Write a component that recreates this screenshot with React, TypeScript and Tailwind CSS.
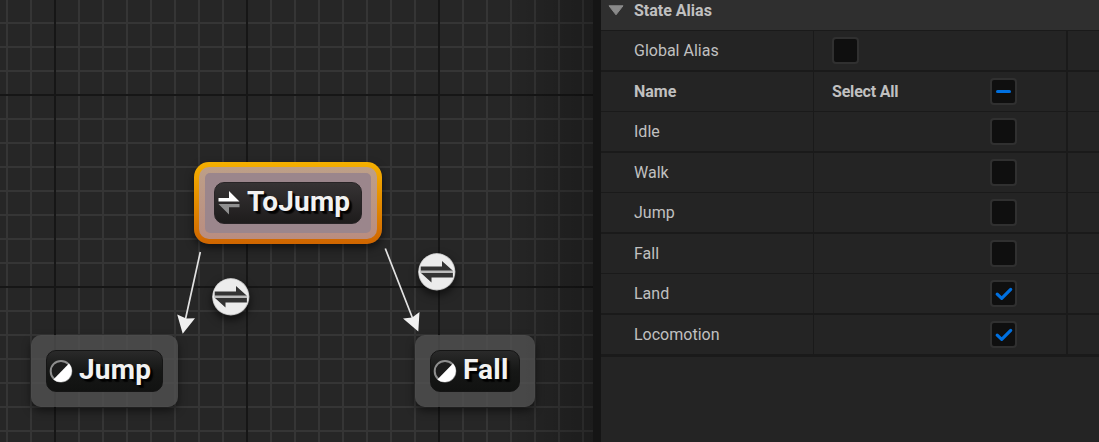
import React from "react";

const ALIASES = [
  { name: "Idle", checked: false },
  { name: "Walk", checked: false },
  { name: "Jump", checked: false },
  { name: "Fall", checked: false },
  { name: "Land", checked: true },
  { name: "Locomotion", checked: true },
];

type BoxState = "off" | "on" | "mixed";

function Checkbox({ state }: { state: BoxState }) {
  return (
    <span className="flex size-[27px] shrink-0 items-center justify-center rounded-[4px] border-2 border-[#303030] bg-[#0f0f0f]">
      {state === "mixed" && <span className="h-[3px] w-[15px] rounded-full bg-[#0070e0]" />}
      {state === "on" && (
        <svg className="h-[23px] w-[23px]" viewBox="0 0 23 23" fill="none">
          <path d="M5.2 12.1 L9.7 16.3 L18.7 7.4" stroke="#0070e0" strokeWidth="3.2" strokeLinecap="round" strokeLinejoin="round" />
        </svg>
      )}
    </span>
  );
}

function Row({
  label,
  line,
  bold,
  children,
}: {
  label: string;
  line: string;
  bold?: boolean;
  children: React.ReactNode;
}) {
  return (
    <div className={`flex border-[#1a1a1a] ${line} ${bold ? "font-bold" : ""}`}>
      <div className="flex h-[39px] w-[212px] items-center pl-[33px]">{label}</div>
      <div className="flex h-[39px] w-[255px] items-center border-r-2 border-l border-[#1a1a1a] pl-[18px]">{children}</div>
    </div>
  );
}

function StateIcon() {
  return (
    <svg className="size-6 shrink-0" viewBox="0 0 24 24">
      <circle cx="12" cy="12.2" r="10.3" fill="#1c1c1c" stroke="#8e8e8e" strokeWidth="2" />
      <path d="M20 4.4 A11.2 11.2 0 0 1 4.4 20.4 Z" fill="#ffffff" />
    </svg>
  );
}

function AliasIcon() {
  return (
    <svg className="h-6 w-[22px] shrink-0" viewBox="0 0 22 24">
      <path d="M0.5 7 H11 V0 L21.5 10.4 H0.5 Z" fill="#ffffff" />
      <path d="M21.5 16.2 H11 V23.4 L0.5 13 H21.5 Z" fill="#8f8f8f" />
    </svg>
  );
}

function Title({ children }: { children: string }) {
  return (
    <span className="text-[28px] leading-[38px] font-bold tracking-[0.2px] text-[#f2f2f2] [text-shadow:2px_2px_1px_rgba(0,0,0,0.8),3px_3px_1px_rgba(0,0,0,0.7)]">
      {children}
    </span>
  );
}

function StateNode({ name, place }: { name: string; place: string }) {
  return (
    <div className={`absolute top-[335px] h-[72px] rounded-[10px] bg-[#525252]/78 p-[15px] shadow-[0_4px_9px_rgba(0,0,0,0.5)] ${place}`}>
      <div className="flex h-[42px] items-center gap-1.5 rounded-[10px] border border-[#151515] bg-linear-to-b from-[#2a2a2a] via-[#161716] to-[#111211] pb-0.5 pl-0.5">
        <div className="mt-px">
          <StateIcon />
        </div>
        <Title>{name}</Title>
      </div>
    </div>
  );
}

function TransitionBadge({ place }: { place: string }) {
  return (
    <svg className={`absolute size-[38px] rounded-full shadow-[0_4px_9px_rgba(0,0,0,0.6)] ${place}`} viewBox="0.3 0.2 38 38">
      <circle cx="19" cy="19" r="18.7" fill="#bdbdbd" />
      <circle cx="19" cy="19" r="17.8" fill="#ececec" />
      <path d="M3 13.7 H24.3 V8.3 L35.2 18 H3 Z" fill="#333333" />
      <path d="M35.2 24.6 H13.8 V29.6 L3 20 H35.2 Z" fill="#333333" />
      <path d="M2.5 19 H35.5" stroke="#bcbcbc" strokeWidth="2" />
    </svg>
  );
}

export default function App() {
  return (
    <div className="flex h-[442px] w-[1099px] overflow-hidden bg-[#242424] font-[Roboto,sans-serif]">
      <main className="relative h-full w-[593px] shrink-0 overflow-hidden bg-[#262626]">
        <svg className="absolute inset-0" width="593" height="442">
          <defs>
            <pattern id="minor" x="6" y="22" width="24" height="24" patternUnits="userSpaceOnUse">
              <path d="M0 1 H24 M1 0 V24" stroke="#353535" strokeWidth="2" />
            </pattern>
            <pattern id="major" x="54" y="94" width="192" height="192" patternUnits="userSpaceOnUse">
              <path d="M0 1 H192 M1 0 V192" stroke="#161616" strokeWidth="2" />
            </pattern>
            <linearGradient id="edge">
              <stop offset="0" stopColor="#000" stopOpacity="0" />
              <stop offset="1" stopColor="#000" stopOpacity="0.26" />
            </linearGradient>
          </defs>
          <rect width="593" height="442" fill="url(#minor)" />
          <rect width="593" height="442" fill="url(#major)" />
          <rect x="503" width="90" height="442" fill="url(#edge)" />
        </svg>

        <StateNode name="Jump" place="left-[31px] w-[147px]" />
        <StateNode name="Fall" place="left-[415px] w-[120px]" />

        <div className="absolute top-[162px] left-[194px] h-[82px] w-[188px] rounded-[15px] bg-linear-to-b from-[#f5b000] to-[#cf6500] p-[5px] shadow-[0_4px_9px_rgba(0,0,0,0.55)]">
          <div className="h-full rounded-[10px] bg-linear-to-b from-[#bd9f88] to-[#b98d80] p-[6px]">
            <div className="h-full rounded-[5px] bg-[#9b868c] p-[9px]">
              <div className="flex h-[42px] items-center gap-[7px] rounded-[10px] border border-[#282426] bg-linear-to-b from-[#363334] to-[#1e1c1c] pb-0.5 pl-[3px]">
                <div className="mt-0.5">
                  <AliasIcon />
                </div>
                <Title>ToJump</Title>
              </div>
            </div>
          </div>
        </div>

        <svg className="absolute inset-0" width="593" height="442">
          <path d="M200.3 252 L185.5 319 M385.3 248.5 L412.5 318" stroke="#e2e2e2" strokeWidth="1.7" />
          <path d="M182.7 333.8 L177.2 314.5 L186.2 318.5 L195 318.3 Z" fill="#f0f0f0" />
          <path d="M418.3 331.5 L403 318.5 L412.2 317.5 L419.5 312 Z" fill="#f0f0f0" />
        </svg>
        <TransitionBadge place="left-[212px] top-[278px]" />
        <TransitionBadge place="left-[418px] top-[253px]" />
      </main>

      <div className="w-2 shrink-0 bg-[#151515]" />

      <aside className="flex min-w-0 flex-1 flex-col text-[16px] leading-5 text-[#c0c0c0]">
        <header className="flex h-[31px] items-start border-b border-[#1a1a1a] bg-[#2f2f2f] pl-[7px]">
          <svg className="mt-[5px] h-[11px] w-4" viewBox="0 0 16 11">
            <path d="M1 0.8 H15 L8 9.8 Z" fill="#8a8a8a" stroke="#8a8a8a" strokeLinejoin="round" />
          </svg>
          <h2 className="mt-px ml-[10px] font-bold">State Alias</h2>
        </header>
        <Row label="Global Alias" line="border-b-2">
          <Checkbox state="off" />
        </Row>
        <Row label="Name" line="border-b" bold>
          <span className="w-[158px] tracking-[-0.2px]">Select All</span>
          <Checkbox state="mixed" />
        </Row>
        {ALIASES.map((a, i) => (
          <Row
            key={a.name}
            label={a.name}
            line={i === ALIASES.length - 1 ? "border-b-3" : i % 2 === 0 ? "border-b-2" : "border-b"}
          >
            <span className="w-[158px]" />
            <Checkbox state={a.checked ? "on" : "off"} />
          </Row>
        ))}
      </aside>
    </div>
  );
}
